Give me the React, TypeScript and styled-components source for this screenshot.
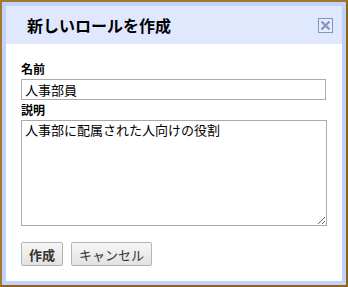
import styled, { createGlobalStyle } from 'styled-components';

const GlobalStyle = createGlobalStyle`
  html, body {
    margin: 0;
    padding: 0;
    background: #ffffff;
  }
  body {
    font-family: 'Noto Sans CJK JP', 'Liberation Sans', sans-serif;
  }
`;

export default function App() {
  return (
    <>
      <GlobalStyle />
      <Frame>
        <Inner>
          <Header>
            <Title>新しいロールを作成</Title>
            <CloseButton aria-label="閉じる">
              <svg width="11" height="11" viewBox="0 0 11 11">
                <path d="M1.5 1.5 L9.5 9.5 M9.5 1.5 L1.5 9.5" stroke="#7b98c2" strokeWidth="2.2" />
              </svg>
            </CloseButton>
          </Header>
          <Body>
            <Label>名前</Label>
            <TextInput defaultValue="人事部員" />
            <Label>説明</Label>
            <TextArea defaultValue="人事部に配属された人向けの役割" />
            <Actions>
              <Button primary>作成</Button>
              <Button>キャンセル</Button>
            </Actions>
          </Body>
        </Inner>
      </Frame>
    </>
  );
}

const Frame = styled.div`
  box-sizing: border-box;
  width: 348px;
  height: 287px;
  border: 2px solid #93621a;
  border-top-color: #a5782c;
  border-left-color: #a5782c;
`;

const Inner = styled.div`
  box-sizing: border-box;
  height: 100%;
  border: 4px solid #c2d3fb;
  display: flex;
  flex-direction: column;
`;

const Header = styled.div`
  height: 38px;
  background: #e0e8fe;
  display: flex;
  align-items: center;
  justify-content: space-between;
  padding: 0 9px 0 21px;
`;

const Title = styled.h1`
  margin: 0;
  font-size: 16px;
  font-weight: bold;
  color: #000;
`;

const CloseButton = styled.button`
  box-sizing: border-box;
  width: 15px;
  height: 15px;
  padding: 0;
  border: 1px solid #7b98c2;
  background: #e6ecfb;
  display: flex;
  align-items: center;
  justify-content: center;
  margin-top: 1px;
`;

const Body = styled.div`
  flex: 1;
  background: #ffffff;
  padding: 17px 16px 0 15px;
  display: flex;
  flex-direction: column;
`;

const Label = styled.label`
  font-size: 12px;
  font-weight: bold;
  line-height: 16px;
  color: #000;
  margin-bottom: 2px;
`;

const TextInput = styled.input`
  box-sizing: border-box;
  width: 305px;
  height: 21px;
  margin: 0 0 2px;
  padding: 0 3px;
  border: 1px solid #aaaaaa;
  font-family: 'Noto Sans CJK JP', sans-serif;
  font-size: 13px;
  color: #000;
  outline: none;
`;

const TextArea = styled.textarea`
  box-sizing: border-box;
  width: 306px;
  height: 106px;
  margin: 0;
  padding: 1px 3px;
  border: 1px solid #aaaaaa;
  font-family: 'Noto Sans CJK JP', sans-serif;
  font-size: 13px;
  line-height: 16px;
  color: #000;
  resize: both;
  outline: none;
`;

const Actions = styled.div`
  display: flex;
  gap: 8px;
  margin-top: 16px;
`;

const Button = styled.button<{ primary?: boolean }>`
  box-sizing: border-box;
  height: 24px;
  padding: 0 7px;
  border: 1px solid #b4b4b4;
  border-radius: 2px;
  background: linear-gradient(#f6f6f6, #e2e2e2);
  font-family: 'Noto Sans CJK JP', sans-serif;
  font-size: 13px;
  font-weight: ${(p) => (p.primary ? 'bold' : 'normal')};
  color: #333;
`;
